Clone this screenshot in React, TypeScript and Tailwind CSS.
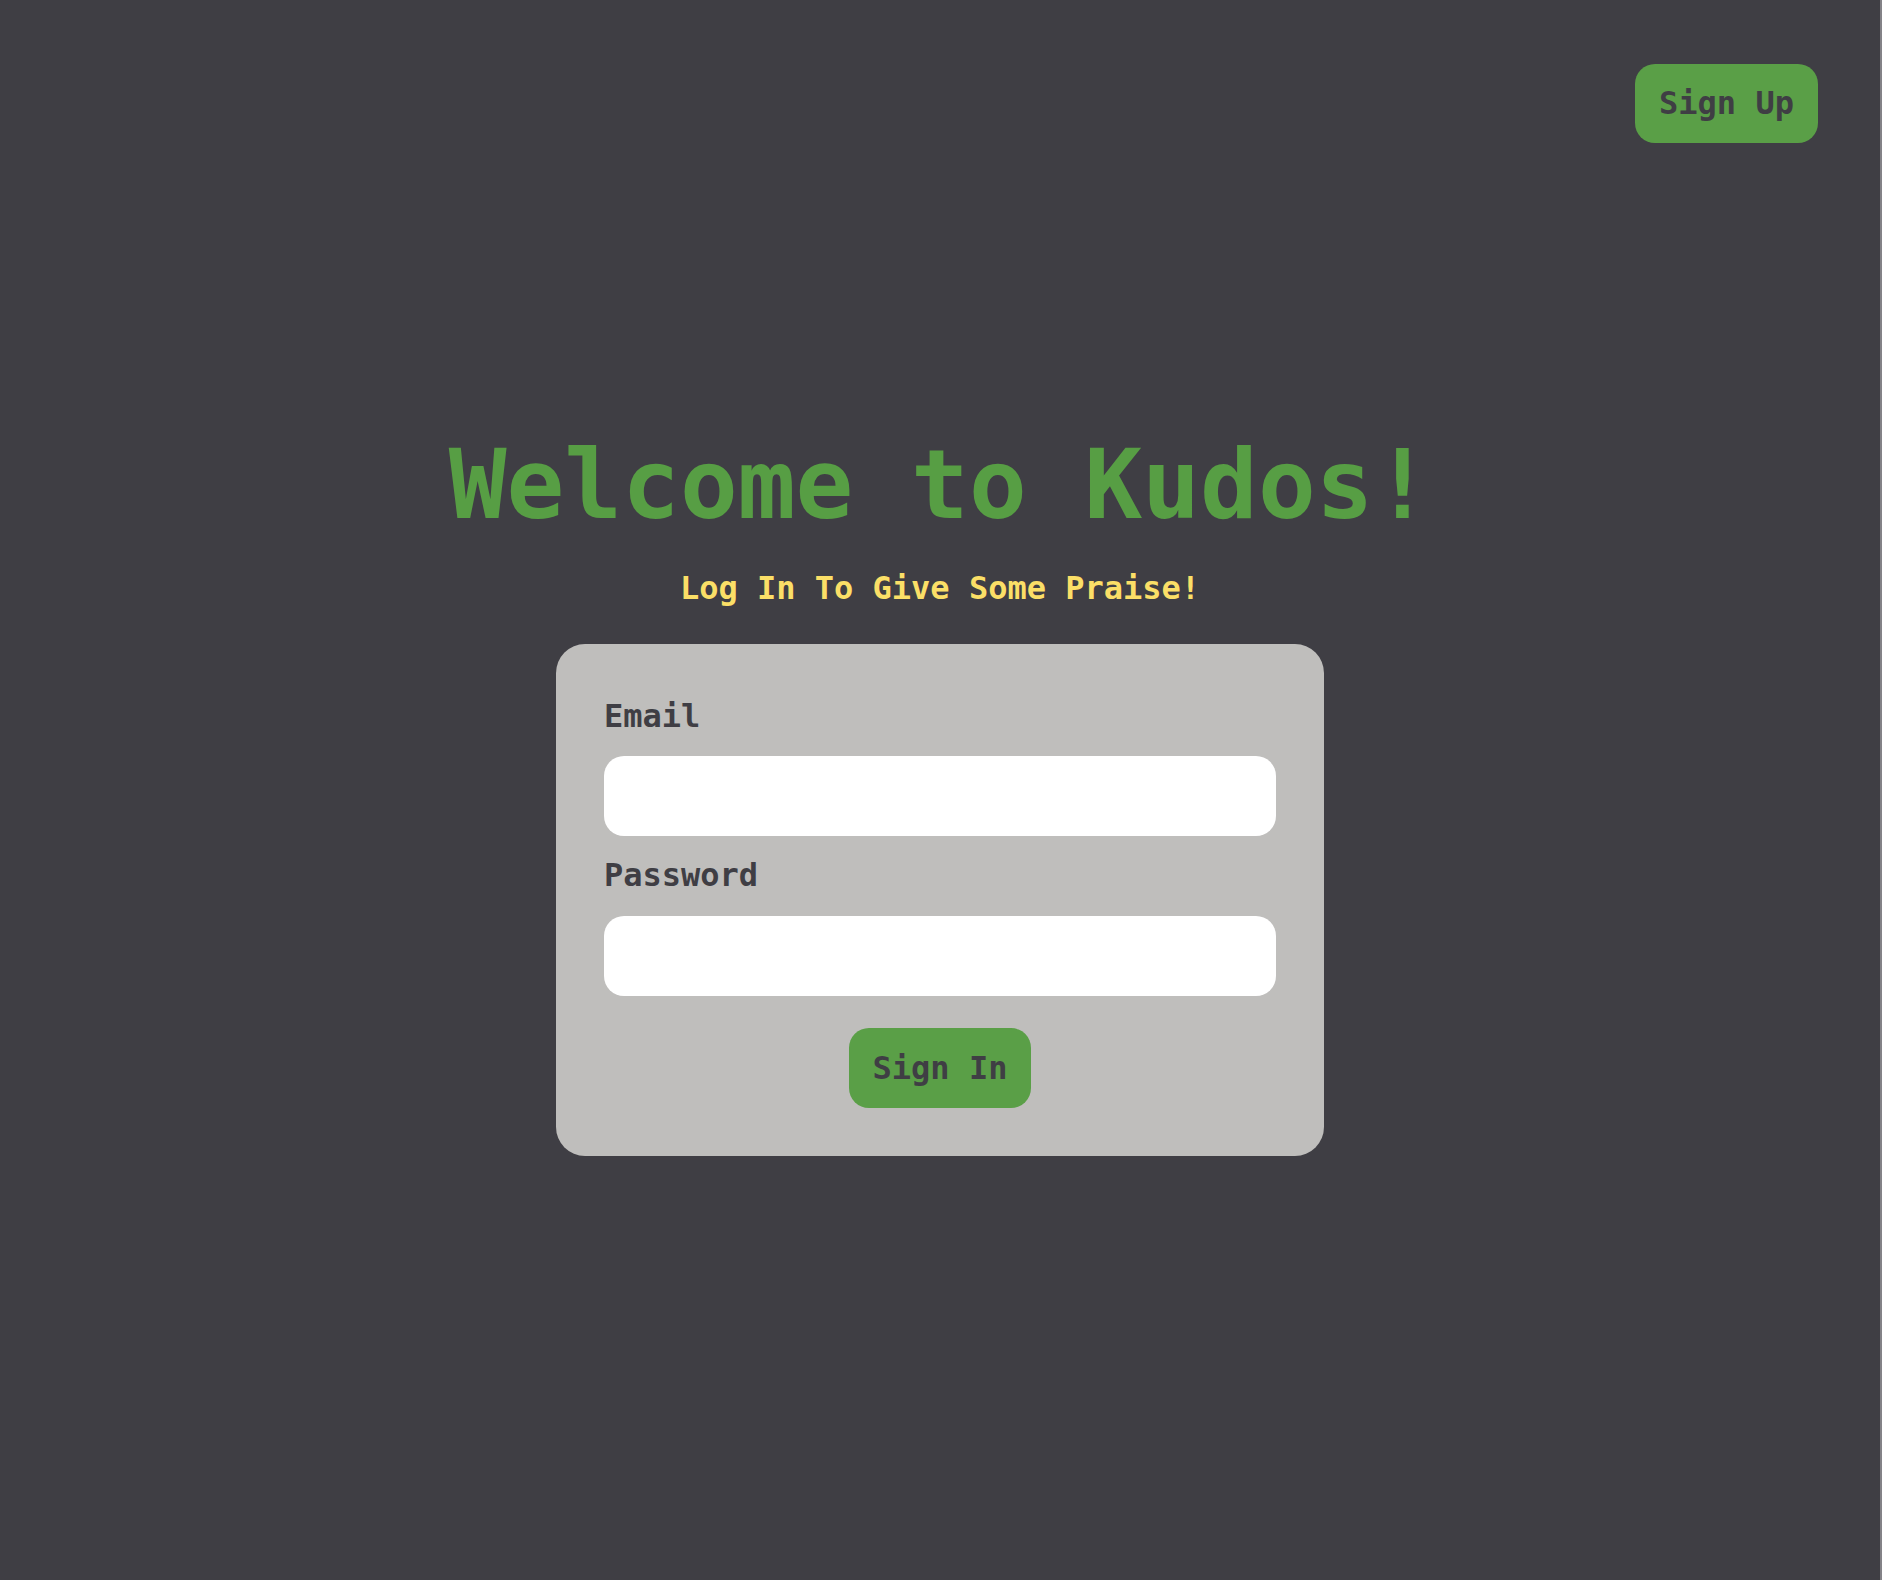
import { useState } from "react";

export default function App() {
  const [email, setEmail] = useState("");
  const [password, setPassword] = useState("");

  return (
    <div className="relative min-h-screen w-full bg-[#3f3e44] border-r-2 border-[#838287] font-['DejaVu_Sans_Mono',monospace] font-bold">
      {/* Top right action */}
      <button className="absolute right-[62px] top-[64px] w-[183px] h-[79px] rounded-[20px] bg-[#5a9f47] text-[32px] leading-[37px] text-[#3f3e44]">
        Sign Up
      </button>

      <div className="min-h-screen flex flex-col items-center justify-center pt-[5px]">
        <h1 className="text-[96px] leading-[112px] text-[#579e44]">
          Welcome to Kudos!
        </h1>
        <p className="mt-[29px] text-[32px] leading-[37px] text-[#fbdf67]">
          Log In To Give Some Praise!
        </p>

        {/* Login card */}
        <form
          className="mt-[37px] w-[768px] rounded-[29px] bg-[#bfbebc] px-12 pt-[54px] pb-12 flex flex-col"
          onSubmit={(e) => e.preventDefault()}
        >
          <label
            htmlFor="email"
            className="text-[32px] leading-[37px] text-[#3f3e44]"
          >
            Email
          </label>
          <input
            id="email"
            type="text"
            value={email}
            onChange={(e) => setEmail(e.target.value)}
            className="mt-[21px] h-[80px] w-full rounded-[20px] bg-white px-5 text-[28px] text-[#3f3e44] outline-none"
          />
          <label
            htmlFor="password"
            className="mt-[21px] text-[32px] leading-[37px] text-[#3f3e44]"
          >
            Password
          </label>
          <input
            id="password"
            type="password"
            value={password}
            onChange={(e) => setPassword(e.target.value)}
            className="mt-[22px] h-[80px] w-full rounded-[20px] bg-white px-5 text-[28px] text-[#3f3e44] outline-none"
          />
          <div className="mt-[32px] flex justify-center">
            <button
              type="submit"
              className="w-[182px] h-[80px] rounded-[20px] bg-[#5a9f47] text-[32px] leading-[37px] text-[#3f3e44]"
            >
              Sign In
            </button>
          </div>
        </form>
      </div>
    </div>
  );
}
